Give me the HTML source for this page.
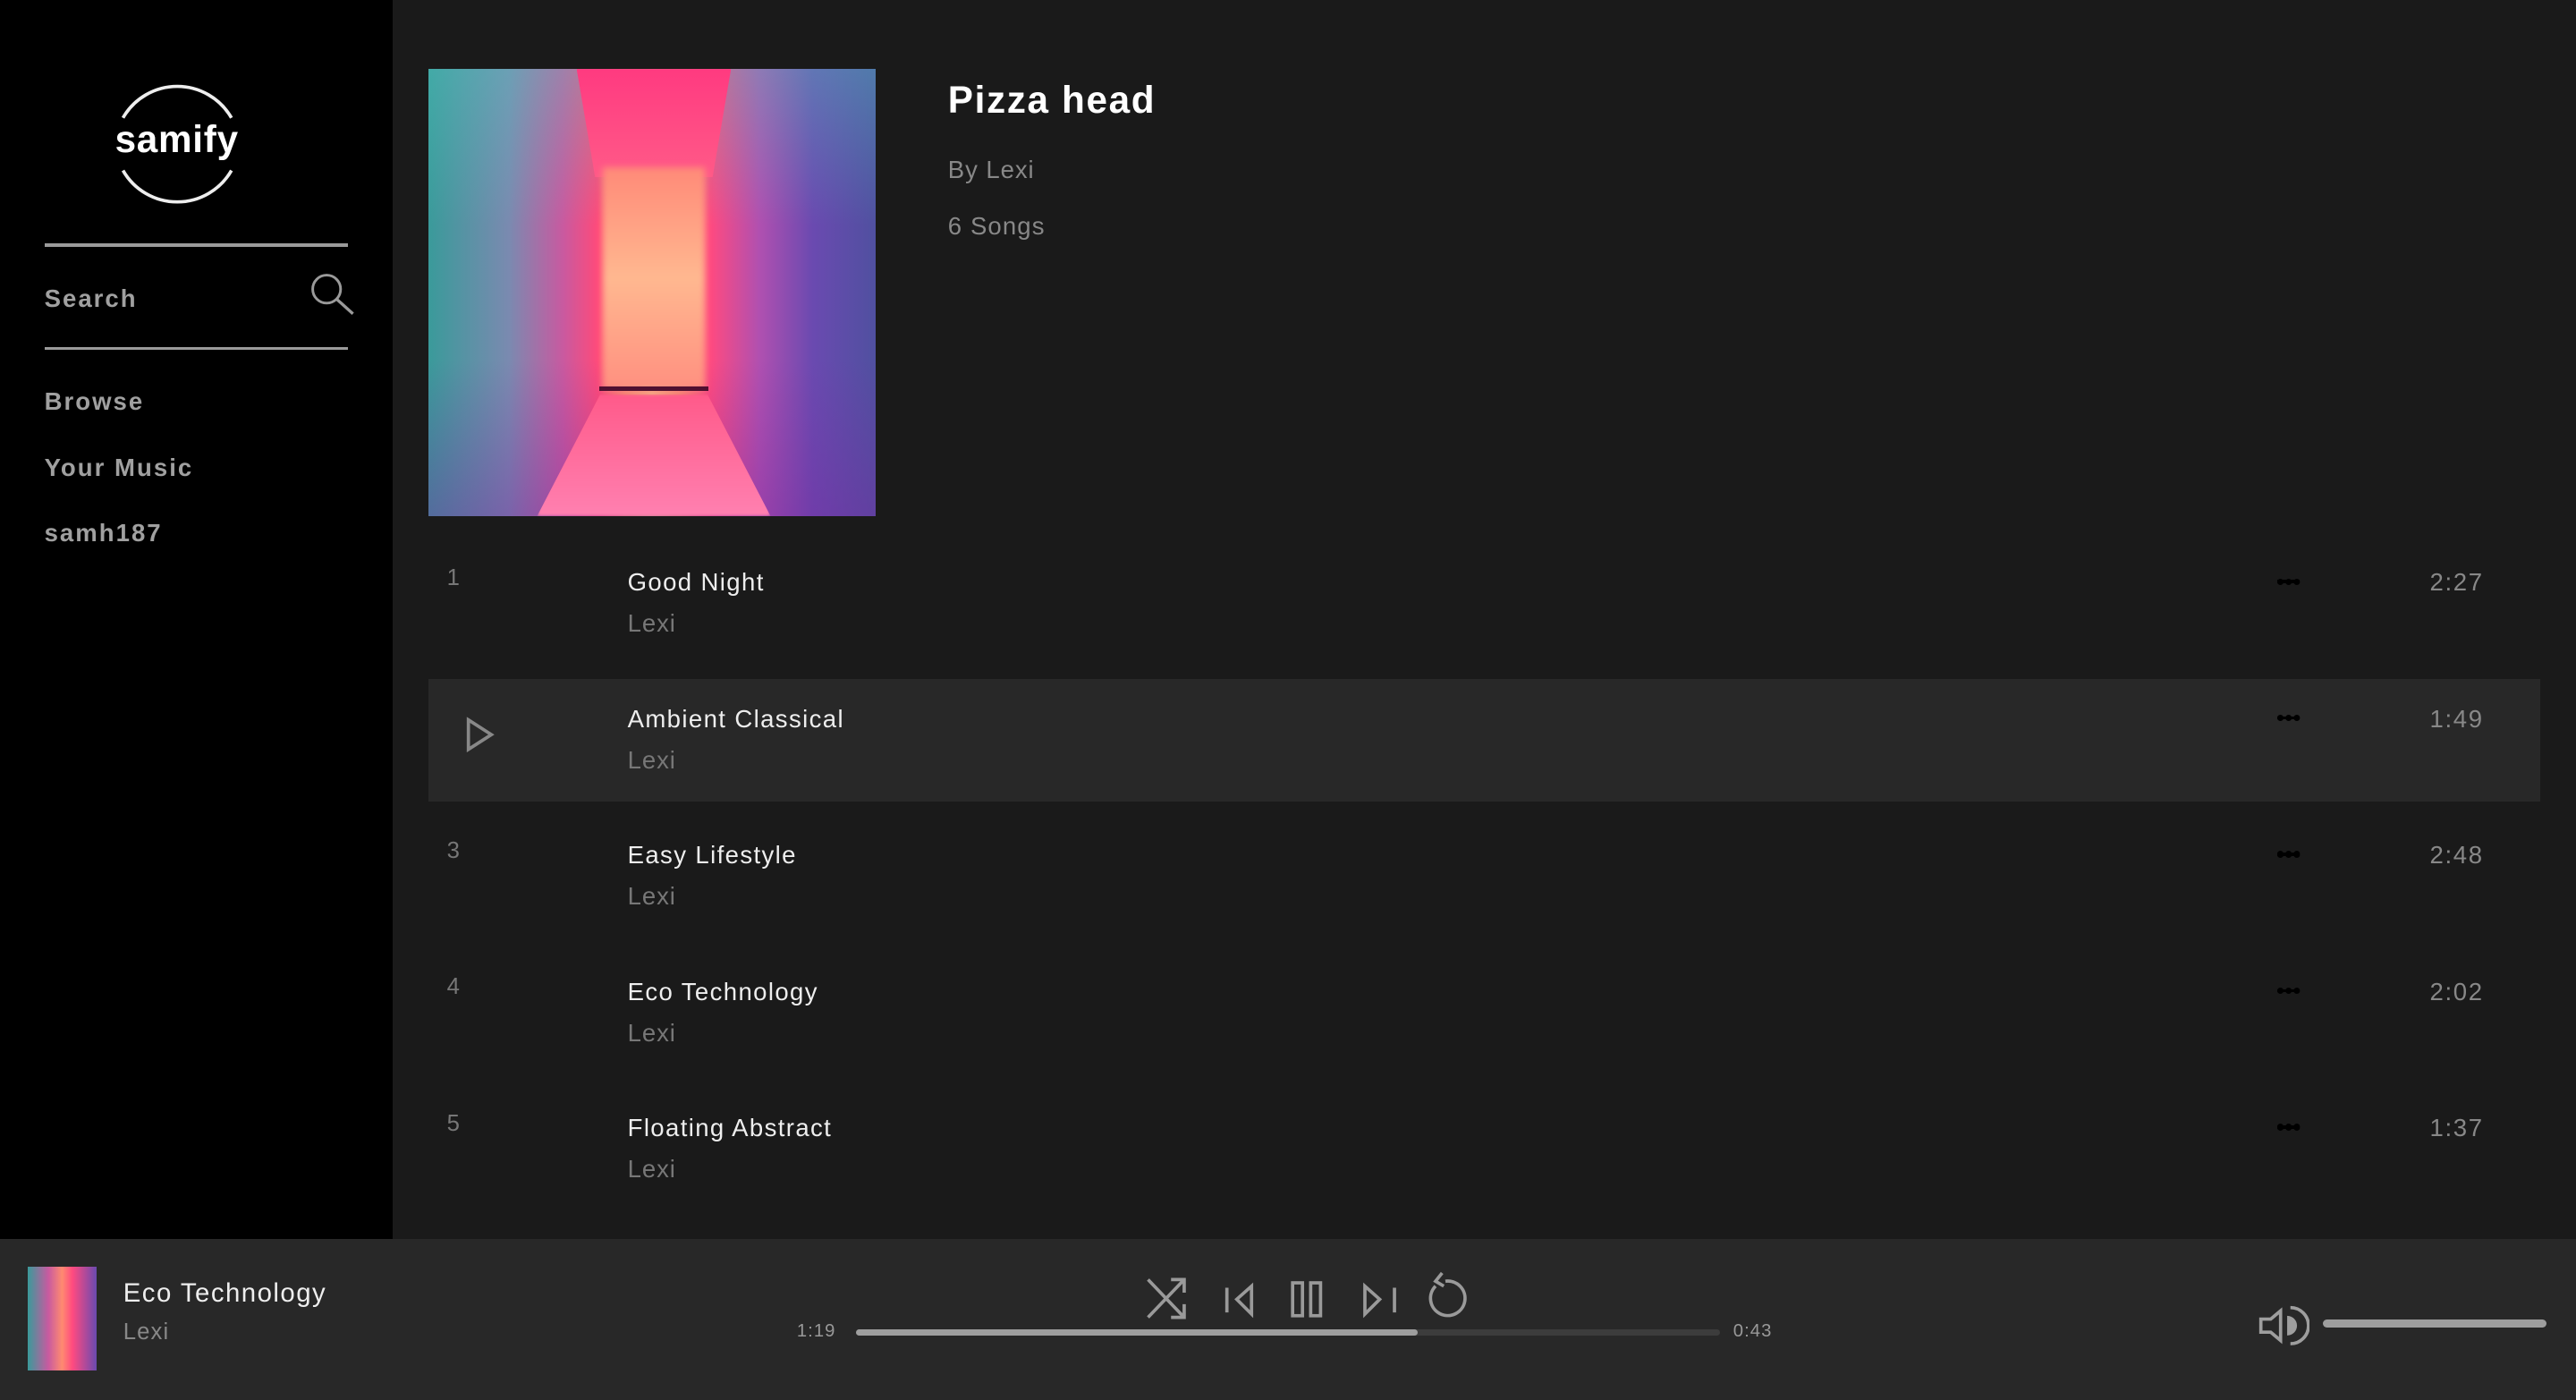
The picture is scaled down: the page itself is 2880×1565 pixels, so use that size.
<!DOCTYPE html>
<html><head><meta charset="utf-8"><style>
html,body{margin:0;padding:0;background:#1a1a1a;overflow:hidden}
body{width:1568px;height:852px;zoom:1.83673;position:relative;font-family:"Liberation Sans",sans-serif}
.a{position:absolute}
#side{left:0;top:0;width:239px;height:754px;background:#000}
.nav{left:27px;color:#a0a0a0;font-weight:bold;font-size:15px;letter-spacing:1.1px}
.hr{left:27px;width:185px;height:2px;background:#9a9a9a}
.row{left:261px;width:1285px;height:75px}
.num{left:11px;top:14px;color:#777;font-size:14px}
.t{left:121px;top:16px;color:#eee;font-size:15px;letter-spacing:.75px}
.s{left:121px;top:41px;color:#777;font-size:15px;letter-spacing:.5px}
.dots{left:1125px;top:23px;width:14px;height:2px;background:#000}
.dots:before{content:"";position:absolute;top:-1px;width:4px;height:4px;border-radius:2px;background:#000;left:0;box-shadow:5px 0 0 #000,10px 0 0 #000}
.dur{left:1218px;top:16px;color:#888;font-size:15px;letter-spacing:.9px}
#bar{left:0;top:754px;width:1568px;height:98px;background:#282828}
</style></head><body>
<div id="side" class="a">
  <svg class="a" style="left:66px;top:46px" width="84" height="84" viewBox="0 0 84 84">
    <path d="M9 26 A38 38 0 0 1 75 26" fill="none" stroke="#eee" stroke-width="2"/>
    <path d="M9 58 A38 38 0 0 0 75 58" fill="none" stroke="#eee" stroke-width="2"/>
  </svg>
  <div class="a" style="left:70px;top:72px;color:#fff;font-weight:bold;font-size:23px;letter-spacing:.4px">samify</div>
  <div class="a hr" style="top:148px"></div>
  <div class="a nav" style="top:173px">Search</div>
  <svg class="a" style="left:188px;top:165px" width="28" height="28" viewBox="0 0 28 28"><circle cx="11" cy="11" r="8.5" fill="none" stroke="#9a9a9a" stroke-width="1.6"/><path d="M17 17 L27 26" stroke="#9a9a9a" stroke-width="1.8"/></svg>
  <div class="a hr" style="top:211px"></div>
  <div class="a nav" style="top:236px">Browse</div>
  <div class="a nav" style="top:276px">Your Music</div>
  <div class="a nav" style="top:316px">samh187</div>
</div>

<div class="a" style="left:261px;top:42px;width:272px;height:272px;overflow:hidden;background:linear-gradient(90deg,#3a9a9a 0%,#7a8ab0 18%,#c85aa0 30%,#ff4a7a 38%,#ff8a70 44%,#ffb080 50%,#ff8a70 56%,#ff4a80 63%,#b050b0 74%,#6a4ab0 86%,#5050a0 100%)">
  <div class="a" style="left:0;top:0;width:272px;height:272px;background:linear-gradient(180deg,rgba(80,200,190,.35) 0%,rgba(0,0,0,0) 35%,rgba(0,0,0,0) 65%,rgba(120,40,160,.4) 100%)"></div>
  <div class="a" style="left:90px;top:0;width:94px;height:66px;background:linear-gradient(180deg,#ff3a80,#ff5a88);clip-path:polygon(0 0,100% 0,88% 100%,12% 100%)"></div>
  <div class="a" style="left:106px;top:60px;width:62px;height:135px;background:linear-gradient(180deg,#ff8a78,#ffb890 50%,#ff9080);filter:blur(2px)"></div>
  <div class="a" style="left:104px;top:193px;width:66px;height:3px;background:#501030"></div>
  <div class="a" style="left:66px;top:198px;width:142px;height:74px;background:linear-gradient(180deg,#ff5a8a,#ff80b0);clip-path:polygon(27% 0,73% 0,100% 100%,0 100%);filter:blur(1px)"></div>
</div>

<div class="a" style="left:577px;top:48px;color:#fff;font-weight:bold;font-size:23px;letter-spacing:.9px">Pizza head</div>
<div class="a" style="left:577px;top:95px;color:#888;font-size:15px;letter-spacing:.5px">By Lexi</div>
<div class="a" style="left:577px;top:129px;color:#888;font-size:15px;letter-spacing:.6px">6 Songs</div>

<div class="a row" style="top:330px"><div class="a num">1</div><div class="a t">Good Night</div><div class="a s">Lexi</div><div class="a dots"></div><div class="a dur">2:27</div></div>
<div class="a row" style="top:413px;background:#282828">
  <svg class="a" style="left:22px;top:23px" width="18" height="22" viewBox="0 0 18 22"><path d="M2 2 L16 11 L2 20 Z" fill="none" stroke="#888" stroke-width="2"/></svg>
  <div class="a t">Ambient Classical</div><div class="a s">Lexi</div><div class="a dots"></div><div class="a dur">1:49</div></div>
<div class="a row" style="top:496px"><div class="a num">3</div><div class="a t">Easy Lifestyle</div><div class="a s">Lexi</div><div class="a dots"></div><div class="a dur">2:48</div></div>
<div class="a row" style="top:579px"><div class="a num">4</div><div class="a t">Eco Technology</div><div class="a s">Lexi</div><div class="a dots"></div><div class="a dur">2:02</div></div>
<div class="a row" style="top:662px"><div class="a num">5</div><div class="a t">Floating Abstract</div><div class="a s">Lexi</div><div class="a dots"></div><div class="a dur">1:37</div></div>

<div id="bar" class="a">
  <div class="a" style="left:17px;top:17px;width:42px;height:63px;background:linear-gradient(90deg,#3a9a9a,#c85aa0 30%,#ff8a70 50%,#ff4a80 65%,#6a4ab0 100%)"></div>
  <div class="a" style="left:75px;top:24px;color:#eee;font-size:16px;letter-spacing:.8px">Eco Technology</div>
  <div class="a" style="left:75px;top:49px;color:#888;font-size:14px;letter-spacing:.6px">Lexi</div>
  <svg class="a" style="left:690px;top:15px" width="220" height="40" viewBox="0 0 220 40">
    <g fill="none" stroke="#9a9a9a" stroke-width="2">
      <path d="M9 10 L31 33 M9 33 L31 10 M23 10 L31 10 L31 18 M23 33 L31 33 L31 25"/>
      <path d="M57 15 L57 30 M72 14 L63 22 L72 31 Z"/>
      <rect x="97" y="12" width="6" height="20"/><rect x="108" y="12" width="6" height="20"/>
      <path d="M141 14 L150 22 L141 31 Z M159 15 L159 30"/>
      <path d="M190 11 A10.5 10.5 0 1 1 184 14" /><path d="M188 6 L184 11 L189 14"/>
    </g>
  </svg>
  <div class="a" style="left:485px;top:50px;color:#999;font-size:11px;letter-spacing:.6px">1:19</div>
  <div class="a" style="left:521px;top:55px;width:526px;height:4px;background:#3c3c3c;border-radius:2px"></div>
  <div class="a" style="left:521px;top:55px;width:342px;height:4px;background:#9e9e9e;border-radius:2px"></div>
  <div class="a" style="left:1055px;top:50px;color:#999;font-size:11px;letter-spacing:.6px">0:43</div>
  <svg class="a" style="left:1374px;top:40px" width="32" height="26" viewBox="0 0 32 26"><path d="M2 9 L8 9 L14 4 L14 22 L8 17 L2 17 Z" fill="none" stroke="#9e9e9e" stroke-width="2"/><path d="M18 7 A6 6 0 0 1 18 19 Z" fill="#9e9e9e"/><path d="M20 2 A11 11 0 0 1 20 24" fill="none" stroke="#9e9e9e" stroke-width="2"/></svg>
  <div class="a" style="left:1414px;top:49px;width:136px;height:5px;background:#9e9e9e;border-radius:3px"></div>
</div>
</body></html>
